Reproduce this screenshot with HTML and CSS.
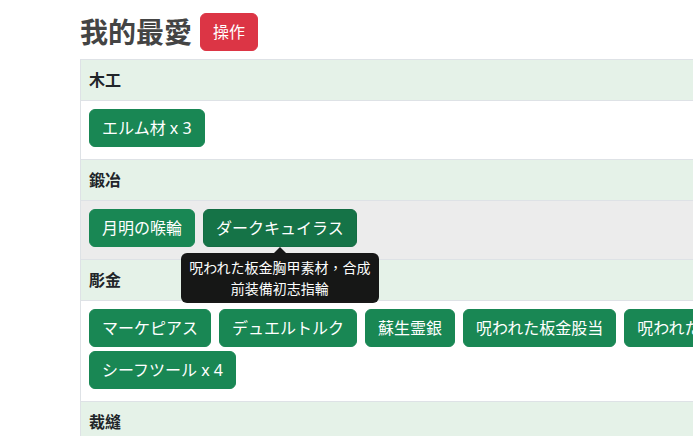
FILE: index.html
```html
<!DOCTYPE html>
<html lang="zh-Hant">
<head>
<meta charset="utf-8">
<title>我的最愛</title>
<link rel="stylesheet" href="styles.css">
</head>
<body>
<div class="page">
  <div class="title-row">
    <h3 class="title">我的最愛</h3>
    <button class="btn btn-danger">操作</button>
  </div>
  <div class="fav-table">
    <div class="row head">木工</div>
    <div class="row body">
      <span class="btn btn-success">エルム材 x 3</span>
    </div>
    <div class="row head">鍛冶</div>
    <div class="row body hover">
      <span class="btn btn-success">月明の喉輪</span>
      <span class="tip-anchor">
        <span class="btn btn-success active">ダークキュイラス</span>
        <span class="tooltip"><span class="tooltip-arrow"></span><span class="tooltip-inner">呪われた板金胸甲素材，合成前装備初志指輪</span></span>
      </span>
    </div>
    <div class="row head">彫金</div>
    <div class="row body">
      <span class="btn btn-success">マーケピアス</span>
      <span class="btn btn-success">デュエルトルク</span>
      <span class="btn btn-success">蘇生霊銀</span>
      <span class="btn btn-success">呪われた板金股当</span>
      <span class="btn btn-success">呪われた板金胸甲</span>
      <span class="btn btn-success">シーフツール x 4</span>
    </div>
    <div class="row head">裁縫</div>
  </div>
</div>
</body>
</html>
```
FILE: styles.css
```css
html, body {
  margin: 0;
  padding: 0;
  overflow: hidden;
  background: #fff;
}
body {
  font-family: "Noto Sans", "Noto Sans CJK TC", "Noto Sans CJK JP", sans-serif;
  font-size: 16px;
  line-height: 1.5;
  color: #212529;
}
.page {
  padding: 13px 0 0 80px;
  width: 900px;
}
.title-row {
  display: flex;
  align-items: center;
  gap: 8px;
  margin-bottom: 8px;
}
.title {
  margin: 0;
  font-size: 28px;
  font-weight: 700;
  line-height: 38px;
  color: #444;
}
.btn {
  display: inline-block;
  box-sizing: border-box;
  font-family: inherit;
  font-size: 16px;
  line-height: 24px;
  padding: 6px 12px;
  border: 1px solid transparent;
  border-radius: 6px;
  color: #fff;
  white-space: nowrap;
  cursor: pointer;
}
.btn-danger {
  background: #dc3545;
  border-color: #dc3545;
}
.btn-success {
  background: #198754;
  border-color: #198754;
}
.btn-success.active {
  background: #157347;
  border-color: #146c43;
}
.fav-table {
  width: 800px;
  border-top: 1px solid #dee2e6;
  border-left: 1px solid #dee2e6;
}
.row {
  border-bottom: 1px solid #dee2e6;
  padding: 8px;
}
.row.head {
  background: #e5f2e8;
  font-weight: 700;
  line-height: 24px;
}
.row.body {
  display: flex;
  flex-wrap: wrap;
}
.row.body > .btn,
.row.body > .tip-anchor {
  margin: 0 8px 4px 0;
}
.row.hover {
  background: #ececec;
}
.tip-anchor {
  position: relative;
  display: inline-block;
}
.tooltip {
  position: absolute;
  top: 100%;
  left: 50%;
  transform: translateX(-50%);
  padding-top: 6px;
  width: 198px;
  opacity: 0.9;
  z-index: 10;
}
.tooltip-arrow {
  position: absolute;
  top: 0;
  left: 50%;
  margin-left: -6px;
  width: 0;
  height: 0;
  border-left: 6px solid transparent;
  border-right: 6px solid transparent;
  border-bottom: 6px solid #000;
}
.tooltip-inner {
  display: block;
  background: #000;
  color: #fff;
  font-size: 14px;
  line-height: 21px;
  padding: 4px 8px;
  border-radius: 6px;
  text-align: center;
  font-weight: 400;
}
```
